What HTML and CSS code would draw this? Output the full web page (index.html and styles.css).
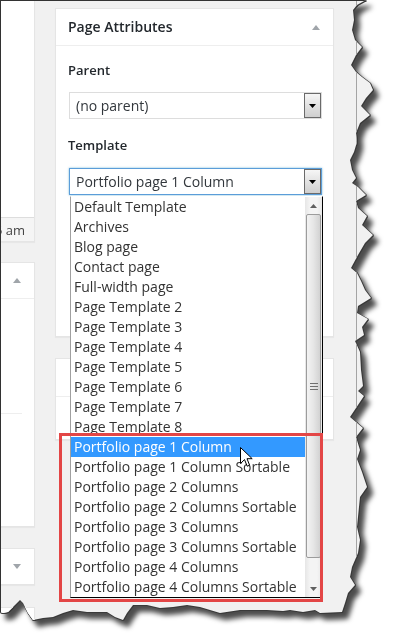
FILE: index.html
```html
<!DOCTYPE html>
<html>
<head>
<meta charset="utf-8">
<link rel="stylesheet" href="styles.css">
</head>
<body>
<div class="frame">
  <div class="paper">
    <div class="col-left">
      <div class="lcard lcard-top">
        <div class="lcard-fill"></div>
        <div class="lcard-foot"><span>5 am</span></div>
      </div>
      <div class="lcard lcard-2">
        <div class="lcard-head"><span class="tri-up"></span></div>
        <div class="lcard-sep"></div>
      </div>
      <div class="lcard lcard-3"><span class="tri-down"></span></div>
      <div class="lcard lcard-4"></div>
    </div>

    <div class="col-right">
      <div class="postbox pa">
        <div class="pb-head">
          <h2>Page Attributes</h2>
          <span class="tri-up"></span>
        </div>
        <div class="pb-body">
          <p class="lbl">Parent</p>
          <div class="select">
            <span>(no parent)</span>
            <span class="sel-btn"><svg width="7" height="4" viewBox="0 0 7 4"><path d="M0 0H7L3.5 4Z" fill="#000"/></svg></span>
          </div>
          <p class="lbl lbl-2">Template</p>
          <div class="select-wrap">
            <div class="select focus">
              <span>Portfolio page 1 Column</span>
              <span class="sel-btn"><svg width="7" height="4" viewBox="0 0 7 4"><path d="M0 0H7L3.5 4Z" fill="#000"/></svg></span>
            </div>
            <div class="listbox">
              <div class="items">
                <div class="item">Default Template</div>
                <div class="item">Archives</div>
                <div class="item">Blog page</div>
                <div class="item">Contact page</div>
                <div class="item">Full-width page</div>
                <div class="item">Page Template 2</div>
                <div class="item">Page Template 3</div>
                <div class="item">Page Template 4</div>
                <div class="item">Page Template 5</div>
                <div class="item">Page Template 6</div>
                <div class="item">Page Template 7</div>
                <div class="item">Page Template 8</div>
                <div class="item sel">Portfolio page 1 Column</div>
                <div class="item">Portfolio page 1 Column Sortable</div>
                <div class="item">Portfolio page 2 Columns</div>
                <div class="item">Portfolio page 2 Columns Sortable</div>
                <div class="item">Portfolio page 3 Columns</div>
                <div class="item">Portfolio page 3 Columns Sortable</div>
                <div class="item">Portfolio page 4 Columns</div>
                <div class="item">Portfolio page 4 Columns Sortable</div>
              </div>
              <div class="sb">
                <div class="sb-btn"><svg width="7" height="4" viewBox="0 0 7 4"><path d="M0 4H7L3.5 0Z" fill="#606060"/></svg></div>
                <div class="thumb"><svg width="8" height="7" viewBox="0 0 8 7"><path d="M0 .5H8M0 3.5H8M0 6.5H8" stroke="#707070" stroke-width="1"/></svg></div>
                <div class="track"></div>
                <div class="sb-btn"><svg width="7" height="4" viewBox="0 0 7 4"><path d="M0 0H7L3.5 4Z" fill="#606060"/></svg></div>
              </div>
            </div>
            <div class="redbox"></div>
            <svg class="cursor" width="13" height="21" viewBox="0 0 13 21"><path d="M0.5 0.5V16.5L4.5 12.6L7.2 19.2L9.6 18.2L7 11.7H12.2Z" fill="#fff" stroke="#000" stroke-width="1" stroke-linejoin="miter"/></svg>
          </div>
        </div>
      </div>
      <div class="postbox pb2">
        <div class="pb2-head"></div>
      </div>
    </div>

    <div class="edge"></div>
  </div>
</div>
</body>
</html>
```

FILE: styles.css
```css
html, body {
  margin: 0;
  padding: 0;
  background: #fff;
}
body {
  font-family: "Open Sans", "DejaVu Sans", sans-serif;
  color: #444;
  overflow: hidden;
}
.frame {
  width: 394px;
  height: 644px;
  filter: drop-shadow(1px 0 0 #3a3a3a) drop-shadow(0 1px 0 #3a3a3a) drop-shadow(5px 6px 2.5px rgba(0, 0, 0, 0.7));
}
.paper {
  width: 394px;
  height: 644px;
  box-sizing: border-box;
  background: #f1f1f1;
  border-left: 1px solid #333;
  border-top: 1px solid #333;
  display: flex;
  align-items: flex-start;
  clip-path: polygon(0 0, 366px 0, 357px 5px, 353px 10px, 354px 20px, 352px 30px, 355px 40px, 362px 47px, 356px 55px, 351px 65px, 356px 72px, 362px 77px, 370px 83px, 373px 90px, 366px 98px, 361px 106px, 370px 115px, 360px 123px, 356px 133px, 357px 142px, 354px 152px, 350px 160px, 352px 170px, 356px 178px, 352px 183px, 358px 187px, 366px 195px, 356px 201px, 358px 208px, 367px 216px, 362px 225px, 373px 235px, 365px 243px, 358px 255px, 351px 268px, 357px 273px, 361px 281px, 365px 290px, 371px 298px, 358px 306px, 357px 313px, 368px 319px, 362px 327px, 364px 335px, 355px 341px, 360px 352px, 361px 370px, 363px 386px, 358px 391px, 364px 396px, 350px 417px, 363px 428px, 356px 437px, 360px 450px, 357px 459px, 362px 472px, 367px 487px, 360px 497px, 357px 527px, 360px 540px, 358px 553px, 352px 567px, 350px 577px, 355px 585px, 348px 593px, 345px 603px, 342px 612px, 320px 613px, 315px 610px, 303px 612px, 290px 610px, 283px 611px, 267px 610px, 240px 610px, 220px 613px, 200px 607px, 187px 605px, 173px 607px, 160px 608px, 147px 605px, 133px 605px, 127px 613px, 123px 620px, 115px 617px, 107px 612px, 97px 612px, 87px 612px, 73px 610px, 63px 613px, 53px 617px, 43px 618px, 33px 620px, 28px 613px, 23px 603px, 20px 600px, 15px 605px, 8px 612px, 3px 613px, 0 612px);
}

/* left column (partially visible boxes) */
.col-left {
  width: 34px;
  display: flex;
  flex-direction: column;
}
.lcard {
  box-sizing: border-box;
  background: #fff;
  border: 1px solid #e5e5e5;
  border-left: 0;
  box-shadow: 0 1px 1px rgba(0, 0, 0, 0.04);
}
.lcard-top {
  border-top: 0;
  height: 241px;
  display: flex;
  flex-direction: column;
}
.lcard-fill {
  flex: 1;
}
.lcard-foot {
  box-sizing: border-box;
  height: 24px;
  border-top: 1px solid #ddd;
  background: #f5f5f5;
  display: flex;
  justify-content: flex-end;
  align-items: center;
  padding-right: 9px;
  overflow: hidden;
  white-space: nowrap;
  font-size: 13px;
  color: #444;
}
.lcard-2 {
  margin-top: 20px;
  height: 265px;
}
.lcard-head {
  box-sizing: border-box;
  height: 36px;
  border-bottom: 1px solid #eee;
  display: flex;
  align-items: center;
  justify-content: center;
  padding-right: 2px;
}
.lcard-sep {
  margin-top: 114px;
  width: 21px;
  height: 1px;
  background: #eee;
}
.lcard-3 {
  margin-top: 21px;
  height: 37px;
  display: flex;
  align-items: center;
  justify-content: center;
  padding-right: 2px;
}
.lcard-4 {
  margin-top: 22px;
  height: 60px;
}
.tri-up {
  width: 0;
  height: 0;
  border-left: 4px solid transparent;
  border-right: 4px solid transparent;
  border-bottom: 5px solid #a0a5aa;
}
.tri-down {
  width: 0;
  height: 0;
  border-left: 4px solid transparent;
  border-right: 4px solid transparent;
  border-top: 5px solid #a0a5aa;
}

/* right column */
.col-right {
  margin-left: 20px;
  width: 279px;
  display: flex;
  flex-direction: column;
}
.postbox {
  box-sizing: border-box;
  background: #fff;
  border: 1px solid #e5e5e5;
  box-shadow: 0 1px 1px rgba(0, 0, 0, 0.04);
}
.pa {
  margin-top: 7px;
  height: 329px;
}
.pb-head {
  box-sizing: border-box;
  height: 37px;
  border-bottom: 1px solid #eee;
  display: flex;
  align-items: center;
  justify-content: space-between;
  padding: 0 13px 0 12px;
}
.pb-head h2 {
  margin: 0;
  font-size: 14px;
  font-weight: 600;
  color: #23282d;
  line-height: 1;
}
.pb-body {
  padding: 0 11px 0 13px;
}
.lbl {
  margin: 15px 0 0 -1px;
  font-size: 13px;
  font-weight: 600;
  line-height: 18px;
  color: #23282d;
}
.lbl-2 {
  margin-top: 17px;
}
.select {
  position: relative;
  box-sizing: border-box;
  margin-top: 13px;
  height: 27px;
  border: 1px solid #ddd;
  background: #fff;
  display: flex;
  align-items: center;
  padding-left: 6px;
  font-size: 14px;
  color: #32373c;
  white-space: nowrap;
}
.select.focus {
  margin-top: 0;
  border-color: #5b9dd9;
  box-shadow: 0 0 2px rgba(30, 140, 190, 0.6);
}
.sel-btn {
  position: absolute;
  top: 0;
  right: 0;
  bottom: 0;
  width: 17px;
  box-sizing: border-box;
  border: 1px solid #6a6a6a;
  background: linear-gradient(#f6f6f6, #e2e2e2 50%, #cfcfcf);
  display: flex;
  align-items: center;
  justify-content: center;
}
.select-wrap {
  position: relative;
  margin-top: 14px;
}
.listbox {
  position: absolute;
  left: 1px;
  top: 28px;
  width: 253px;
  height: 402px;
  box-sizing: border-box;
  border-top: 1px solid #fff;
  border-left: 1px solid #a0a0a0;
  border-right: 1px solid #000;
  border-bottom: 1px solid #000;
  background: #fff;
  display: flex;
  z-index: 2;
}
.items {
  width: 234px;
  display: flex;
  flex-direction: column;
}
.item {
  height: 20px;
  line-height: 20px;
  padding-left: 3px;
  font-size: 14px;
  color: #333;
  white-space: nowrap;
  overflow: hidden;
}
.item.sel {
  background: #3399ff;
  color: #fff;
}
.sb {
  width: 17px;
  background: linear-gradient(90deg, #e6e6e6, #f4f4f4 30%, #f4f4f4 70%, #e8e8e8);
  display: flex;
  flex-direction: column;
}
.sb-btn {
  height: 17px;
  display: flex;
  align-items: center;
  justify-content: center;
}
.thumb {
  margin: 0 1px;
  height: 344px;
  box-sizing: border-box;
  border: 1px solid #9c9c9c;
  border-radius: 2px;
  background: linear-gradient(90deg, #f3f3f3, #e6e6e6 50%, #d2d2d2);
  display: flex;
  align-items: center;
  justify-content: center;
}
.track {
  flex: 1;
}
.redbox {
  position: absolute;
  left: -10px;
  top: 265px;
  width: 264px;
  height: 169px;
  box-sizing: border-box;
  border: 3px solid #e34646;
  z-index: 3;
}
.cursor {
  position: absolute;
  left: 171px;
  top: 279px;
  z-index: 4;
}
.pb2 {
  margin-top: 21px;
  height: 82px;
}
.pb2-head {
  box-sizing: border-box;
  height: 38px;
  border-bottom: 1px solid #eee;
}
.edge {
  align-self: stretch;
  width: 1px;
  margin-left: 22px;
  background: #a4a4a4;
}
```
